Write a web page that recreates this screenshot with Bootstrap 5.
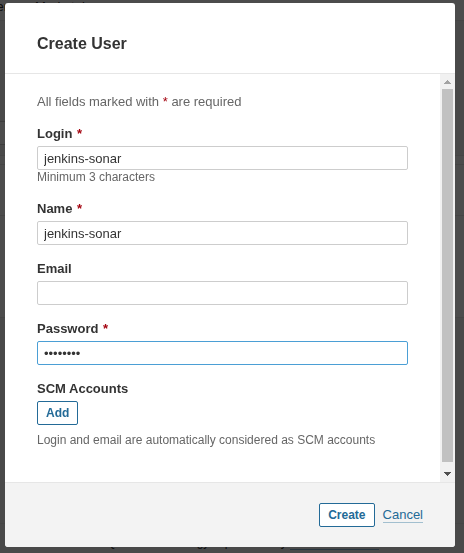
<!DOCTYPE html>
<html lang="en">
<head>
<meta charset="utf-8">
<meta name="viewport" content="width=device-width, initial-scale=1">
<title>Create User</title>
<link href="https://cdn.jsdelivr.net/npm/bootstrap@5.3.0/dist/css/bootstrap.min.css" rel="stylesheet">
<style>
  body { font-family: "Liberation Sans", Arial, sans-serif; font-size: 13px; line-height: 16px; color: #333; background: #f3f3f3; }
  .page { height: 100vh; }
  .page-nav { height: 21px; line-height: 14px; gap: 27px; background: #fff; border-bottom: 1px solid #e6e6e6; }
  .page-nav span:first-child { width: 8px; direction: rtl; white-space: nowrap; }
  .page-head { height: 100px; }
  .page-search { height: 24px; margin-right: 20px; background: #fff; border-top: 1px solid #ccc; border-bottom: 1px solid #ccc; }
  .page-gap { height: 10px; }
  .page-list { border-top: 1px solid #e6e6e6; border-bottom: 1px solid #e6e6e6; background: #fff; }
  .page-list-head { height: 9px; border-bottom: 1px solid #e6e6e6; }
  .page-row { height: 51px; border-bottom: 1px solid #e6e6e6; }
  .page-rows-end { height: 101px; }
  .page-foot { height: 30px; padding: 0 10px 4px 0; border-top: 1px solid #e6e6e6; font-size: 12px; line-height: 13px; white-space: nowrap; }
  .page-foot a { color: #236a97; text-decoration: none; border-bottom: 1px solid #8ab3d0; }
  .shade { background: rgba(0, 0, 0, .7); }
  .user-dialog { height: calc(100vh - 9px); margin: 3px 9px 6px 5px; max-width: none; }
  .user-dialog .modal-content { height: 100%; border: 0; border-radius: 3px; color: inherit; }
  .modal-header { height: 71px; padding: 30px 32px 18px; border-bottom: 1px solid #e6e6e6; border-radius: 0; }
  .modal-title { font-size: 16px; line-height: 20px; font-weight: 700; }
  .modal-body { padding: 20px 32px; min-width: 0; }
  .modal-body .intro, .hint { color: #666; }
  .intro, .field { margin-bottom: 16px; }
  .must { color: #a4030f; }
  .form-label .must { margin-left: 1px; }
  .field .form-label { display: block; margin-bottom: 4px; font-weight: 700; }
  .field .form-control { height: 24px; padding: 0 6px; border: 1px solid #cdcdcd; border-radius: 2px; font-size: 13px; line-height: 22px; color: #333; box-shadow: none; }
  .field .form-control.active-box, .field .form-control:focus { border-color: #4b9fd5; }
  .hint { font-size: 12px; line-height: 15px; }
  .line-btn { height: 24px; padding: 0 8px; border: 1px solid #236a97; border-radius: 2px; background: #fff; color: #236a97; font-size: 12px; line-height: 22px; font-weight: 700; }
  .line-btn:hover { background: #236a97; color: #fff; }
  .modal-footer { padding: 20px 32px; gap: 8px; border-top: 1px solid #e6e6e6; background: #f3f3f3; border-radius: 0 0 3px 3px; }
  .modal-footer > * { margin: 0; }
  .cancel-link { line-height: 14px; color: #236a97; text-decoration: none; border-bottom: 1px solid #a2bfcf; }
  .rail { width: 15px; padding: 0 2px; background: #f1f1f1; }
  .rail svg { display: block; width: 11px; }
  .rail-up { height: 15px; }
  .rail-down { height: 20px; }
  .rail-thumb { background: #c1c1c1; }
</style>
<script src="https://cdn.jsdelivr.net/npm/bootstrap@5.3.0/dist/js/bootstrap.bundle.min.js"></script>
</head>
<body>
<div class="page d-flex flex-column overflow-hidden" aria-hidden="true">
  <div class="page-nav d-flex flex-shrink-0"><span>er</span><span>Marketplace</span></div>
  <div class="page-head flex-shrink-0"></div>
  <div class="page-search flex-shrink-0"></div>
  <div class="page-gap flex-shrink-0"></div>
  <div class="page-list">
    <div class="page-list-head"></div>
    <div class="page-row"></div>
    <div class="page-rows-end"></div>
  </div>
  <div class="flex-grow-1"></div>
  <div class="page-foot d-flex align-items-end justify-content-center flex-shrink-0">
    <div>SonarQube™ technology is powered by <a href="#" tabindex="-1">SonarSource SA</a></div>
  </div>
</div>

<div class="modal d-block shade" role="dialog" aria-modal="true" aria-labelledby="dialog-title">
  <div class="modal-dialog user-dialog">
    <form class="modal-content overflow-hidden">
      <div class="modal-header flex-shrink-0">
        <h1 class="modal-title" id="dialog-title">Create User</h1>
      </div>
      <div class="d-flex flex-grow-1 overflow-hidden">
        <div class="modal-body overflow-hidden">
          <p class="intro">All fields marked with <span class="must">*</span> are required</p>
          <div class="field">
            <label class="form-label" for="login">Login <span class="must">*</span></label>
            <input class="form-control" id="login" type="text" value="jenkins-sonar" aria-describedby="login-hint">
            <div class="hint" id="login-hint">Minimum 3 characters</div>
          </div>
          <div class="field">
            <label class="form-label" for="name">Name <span class="must">*</span></label>
            <input class="form-control" id="name" type="text" value="jenkins-sonar">
          </div>
          <div class="field">
            <label class="form-label" for="email">Email</label>
            <input class="form-control" id="email" type="email">
          </div>
          <div class="field">
            <label class="form-label" for="password">Password <span class="must">*</span></label>
            <input class="form-control active-box" id="password" type="password" value="password">
          </div>
          <div class="field mb-0">
            <label class="form-label" for="add-scm">SCM Accounts</label>
            <button class="btn line-btn d-block mb-2" id="add-scm" type="button">Add</button>
            <div class="hint">Login and email are automatically considered as SCM accounts</div>
          </div>
        </div>
        <div class="rail d-flex flex-column flex-shrink-0" aria-hidden="true">
          <svg class="rail-up flex-shrink-0" viewBox="0 0 11 15" shape-rendering="crispEdges"><path fill="#a3a3a3" d="M5 6h1v1h1v1h1v1h1v1H2V9h1V8h1V7h1z"/></svg>
          <div class="rail-thumb flex-grow-1"></div>
          <svg class="rail-down flex-shrink-0" viewBox="0 0 11 20" shape-rendering="crispEdges"><path fill="#505050" d="M2 10h7v1H8v1H7v1H6v1H5v-1H4v-1H3v-1H2z"/></svg>
        </div>
      </div>
      <div class="modal-footer flex-shrink-0">
        <button class="btn line-btn" type="submit">Create</button>
        <a class="cancel-link" href="#">Cancel</a>
      </div>
    </form>
  </div>
</div>
</body>
</html>
